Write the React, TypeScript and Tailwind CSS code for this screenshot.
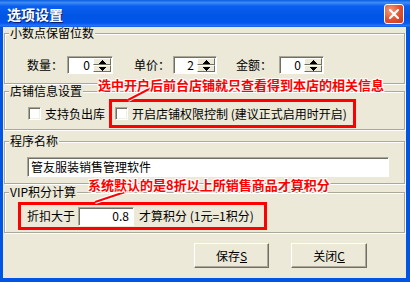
import React from 'react';

function Group({ title, className = '', children }: { title: string; className?: string; children: React.ReactNode }) {
  return (
    <fieldset className={`mx-px border border-[#ACA899] shadow-[inset_1px_1px_0_#fff,1px_1px_0_#fff] ${className}`}>
      <legend className="ml-[4px] bg-[#ECE9D8] px-px text-[12px] leading-[12px]">{title}</legend>
      {children}
    </fieldset>
  );
}

function Arrow({ up }: { up?: boolean }) {
  return (
    <div className="flex h-[7px] items-center justify-center border border-t-white border-l-white border-b-[#716F64] border-r-[#716F64] bg-[#ECE9D8]">
      <svg width="7" height="4" viewBox="0 0 7 4" shapeRendering="crispEdges">
        <polygon points={up ? '3.5,0 7,4 0,4' : '0,0 7,0 3.5,4'} fill="#000" />
      </svg>
    </div>
  );
}

function Spinner({ value, width }: { value: string; width: string }) {
  return (
    <div className={`flex h-[18px] ${width} border border-t-[#ACA899] border-l-[#ACA899] border-b-white border-r-white bg-white shadow-[inset_1px_1px_0_#716F64]`}>
      <span className="flex-1 pr-[3px] text-right text-[12px] leading-[16px]">{value}</span>
      <div className="flex w-[19px] flex-col pt-px pr-px">
        <Arrow up />
        <Arrow />
      </div>
    </div>
  );
}

function Checkbox() {
  return (
    <span className="block h-[13px] w-[13px] shrink-0 border border-t-[#ACA899] border-l-[#ACA899] border-b-white border-r-white bg-white shadow-[inset_1px_1px_0_#716F64,inset_-1px_-1px_0_#F1EFE2]" />
  );
}

function Button({ label, hotkey, width }: { label: string; hotkey: string; width: string }) {
  return (
    <button className={`flex h-[25px] ${width} items-center justify-center border border-t-white border-l-white border-b-[#716F64] border-r-[#716F64] bg-[#ECE9D8] text-[12px] leading-[12px] shadow-[inset_-1px_-1px_0_#ACA899]`}>
      {label}
      <u>{hotkey}</u>
    </button>
  );
}

const outline =
  '[text-shadow:1px_0_0_#fff,-1px_0_0_#fff,0_1px_0_#fff,0_-1px_0_#fff,1px_1px_0_#fff,-1px_-1px_0_#fff,1px_-1px_0_#fff,-1px_1px_0_#fff]';

export default function App() {
  return (
    <div className="relative flex h-[282px] w-[410px] flex-col overflow-hidden bg-[#0055E5] font-['Noto_Sans_CJK_SC','Liberation_Sans',sans-serif] text-black">
      {/* title bar */}
      <div className="flex h-[27px] items-center justify-between bg-[linear-gradient(to_bottom,#0a5ee0_0%,#3f8cf3_10%,#0a5ff0_22%,#0055e5_60%,#0157f0_85%,#2a78f5_96%,#0a4fd8_100%)] pl-[7px] pr-[6px] pt-px">
        <span className="text-[14px] font-bold leading-[16px] text-white [text-shadow:1px_1px_0_#0a1e6a]">选项设置</span>
        <div className="flex h-[20px] w-[20px] items-center justify-center rounded-[3px] border border-white bg-[radial-gradient(circle_at_30%_30%,#f39a7a,#e0502f_55%,#c63a1f)]">
          <svg width="10" height="10" viewBox="0 0 10 10">
            <path d="M1 1L9 9M9 1L1 9" stroke="#fff" strokeWidth="2.2" strokeLinecap="square" />
          </svg>
        </div>
      </div>

      {/* body */}
      <div className="mb-[4px] ml-[3px] mr-[4px] flex flex-1 flex-col bg-[#ECE9D8]">
        <Group title="小数点保留位数">
          <div className="flex items-center pb-[9px] pl-[22px] pt-[17px] text-[12px] leading-[14px]">
            <span className="w-[40px]">数量：</span>
            <Spinner value="0" width="w-[46px]" />
            <span className="ml-[21px] w-[39px]">单价：</span>
            <Spinner value="2" width="w-[44px]" />
            <span className="ml-[19px] w-[43px]">金额：</span>
            <Spinner value="0" width="w-[45px]" />
          </div>
        </Group>

        <Group title="店铺信息设置" className="mt-px">
          <div className="flex items-center pb-px pl-[23px] pt-[2px] text-[12px] leading-[14px]">
            <Checkbox />
            <span className="ml-[4px]">支持负出库</span>
            <div className="ml-[4px] flex h-[29px] items-center border-[3px] border-[#FF0000] pl-[3px] pr-[6px]">
              <Checkbox />
              <span className="ml-[4px]">开启店铺权限控制 (建议正式启用时开启)</span>
            </div>
          </div>
        </Group>

        <Group title="程序名称" className="mt-[5px]">
          <div className="pb-[6px] pl-[22px] pt-[10px]">
            <div className="flex h-[20px] w-[362px] items-center border border-t-[#ACA899] border-l-[#ACA899] border-b-white border-r-white bg-white pl-[3px] text-[12px] leading-[14px] shadow-[inset_1px_1px_0_#716F64]">
              管友服装销售管理软件
            </div>
          </div>
        </Group>

        <Group title="VIP积分计算" className="mt-[2px]">
          <div className="pb-[2px] pl-[13px] pt-[4px]">
            <div className="flex h-[28px] w-[249px] items-center border-[3px] border-[#FF0000] pl-[6px] text-[12px] leading-[14px]">
              <span>折扣大于</span>
              <div className="ml-[3px] flex h-[19px] w-[56px] items-center justify-end border border-t-[#ACA899] border-l-[#ACA899] border-b-white border-r-white bg-white pr-[4px] shadow-[inset_1px_1px_0_#716F64]">
                0.8
              </div>
              <span className="ml-[5px]">才算积分 (1元=1积分)</span>
            </div>
          </div>
        </Group>

        <div className="mt-[10px] flex justify-end gap-[22px] pr-[39px]">
          <Button label="保存" hotkey="S" width="w-[75px]" />
          <Button label="关闭" hotkey="C" width="w-[76px]" />
        </div>
      </div>

      {/* annotations */}
      <svg className="pointer-events-none absolute left-0 top-0" width="410" height="282">
        <line x1="128" y1="100" x2="151" y2="88" stroke="#fff" strokeWidth="4" />
        <line x1="128" y1="100" x2="151" y2="88" stroke="#FF0000" strokeWidth="2" />
        <line x1="95" y1="202" x2="128" y2="191" stroke="#fff" strokeWidth="4" />
        <line x1="95" y1="202" x2="128" y2="191" stroke="#FF0000" strokeWidth="2" />
      </svg>
      <span className={`absolute left-[98px] top-[78px] whitespace-nowrap text-[13px] font-bold leading-[14px] text-[#FF0000] ${outline}`}>
        选中开户后前台店铺就只查看得到本店的相关信息
      </span>
      <span className={`absolute left-[88px] top-[178px] whitespace-nowrap text-[13px] font-bold leading-[14px] text-[#FF0000] ${outline}`}>
        系统默认的是8折以上所销售商品才算积分
      </span>
    </div>
  );
}
